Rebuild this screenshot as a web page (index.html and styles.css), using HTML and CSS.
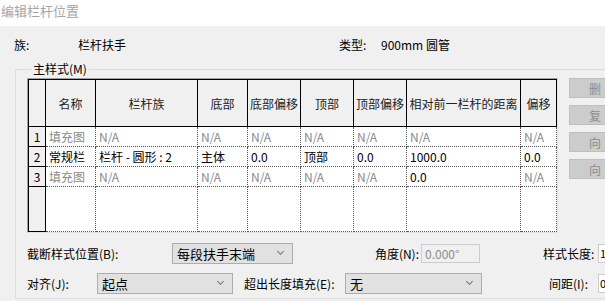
FILE: index.html
```html
<!DOCTYPE html>
<html>
<head>
    <title>编辑栏杆位置</title>
    <link rel="stylesheet" href="styles.css">
</head>
<body>
    <div class="titlebar">编辑栏杆位置</div>
    <div class="dialog">
        <div class="info">
            <span class="info-label">族:</span>
            <span class="info-value">栏杆扶手</span>
            <span class="info-label type-label">类型:</span>
            <span class="info-value type-value">900mm 圆管</span>
        </div>
        <fieldset class="group">
            <legend>主样式(M)</legend>
            <div class="main">
                <div class="grid-frame">
                    <table class="grid">
                        <colgroup>
                            <col style="width:17px">
                            <col style="width:50px">
                            <col style="width:102px">
                            <col style="width:50px">
                            <col style="width:53px">
                            <col style="width:53px">
                            <col style="width:53px">
                            <col style="width:114px">
                            <col style="width:36px">
                        </colgroup>
                        <tr class="head">
                            <th></th>
                            <th>名称</th>
                            <th>栏杆族</th>
                            <th>底部</th>
                            <th>底部偏移</th>
                            <th>顶部</th>
                            <th>顶部偏移</th>
                            <th>相对前一栏杆的距离</th>
                            <th>偏移</th>
                        </tr>
                        <tr class="dim">
                            <th>1</th>
                            <td>填充图</td>
                            <td>N/A</td>
                            <td>N/A</td>
                            <td>N/A</td>
                            <td>N/A</td>
                            <td>N/A</td>
                            <td>N/A</td>
                            <td>N/A</td>
                        </tr>
                        <tr>
                            <th>2</th>
                            <td>常规栏</td>
                            <td>栏杆 - 圆形 : 2</td>
                            <td>主体</td>
                            <td>0.0</td>
                            <td>顶部</td>
                            <td>0.0</td>
                            <td>1000.0</td>
                            <td>0.0</td>
                        </tr>
                        <tr class="dim">
                            <th>3</th>
                            <td>填充图</td>
                            <td>N/A</td>
                            <td>N/A</td>
                            <td>N/A</td>
                            <td>N/A</td>
                            <td>N/A</td>
                            <td class="value">0.0</td>
                            <td>N/A</td>
                        </tr>
                        <tr class="empty">
                            <th></th>
                            <td></td>
                            <td></td>
                            <td></td>
                            <td></td>
                            <td></td>
                            <td></td>
                            <td></td>
                            <td></td>
                        </tr>
                    </table>
                </div>
                <div class="side-buttons">
                    <button class="side-btn">删</button>
                    <button class="side-btn">复</button>
                    <button class="side-btn">向</button>
                    <button class="side-btn">向</button>
                </div>
            </div>
            <div class="field-row first-row">
                <span class="label break-label">截断样式位置(B):</span>
                <div class="combo combo-break">每段扶手末端<span class="caret"></span></div>
                <span class="label angle-label">角度(N):</span>
                <div class="textbox angle-box">0.000°</div>
                <span class="label length-label">样式长度:</span>
                <div class="textbox edge-box">1</div>
            </div>
            <div class="field-row second-row">
                <span class="label align-label">对齐(J):</span>
                <div class="combo combo-align">起点<span class="caret"></span></div>
                <span class="label fill-label">超出长度填充(E):</span>
                <div class="combo combo-fill">无<span class="caret"></span></div>
                <span class="label spacing-label">间距(I):</span>
                <div class="textbox edge-box">0</div>
            </div>
        </fieldset>
    </div>
</body>
</html>
```

FILE: styles.css
```css
body {
    margin: 0;
    padding: 0;
    width: 605px;
    height: 301px;
    overflow: hidden;
    background-color: #f0f0f0;
    color: #000;
    font-family: "Noto Sans CJK SC", "Noto Sans", sans-serif;
    font-size: 12px;
}
.titlebar {
    height: 26px;
    background: #fff;
    color: #a6a6a6;
    font-size: 13px;
    line-height: 22px;
    padding-left: 1px;
}
.info {
    display: flex;
    align-items: center;
    height: 36px;
    padding-left: 14px;
}
.info-label {
    width: 64px;
}
.info-value {
    width: 261px;
}
.type-label {
    width: 42px;
}
.type-value {
    width: auto;
}
.group {
    margin: 0 0 0 15px;
    padding: 0 0 0 11px;
    border: 1px solid #dcdcdc;
    border-right: none;
    height: 237px;
    box-sizing: border-box;
}
.group legend {
    padding: 0 2px;
    margin-left: 4px;
    line-height: 14px;
}
.main {
    display: flex;
    align-items: flex-start;
    margin-top: 2px;
}
.grid-frame {
    border-top: 1px solid #a0a0a0;
    border-left: 1px solid #a0a0a0;
    border-bottom: 1px solid #e3e3e3;
    border-right: 1px solid #e3e3e3;
    background: #fff;
}
.grid {
    border-collapse: collapse;
    table-layout: fixed;
    width: 529px;
    background: #fff;
}
.grid th,
.grid td {
    padding: 0 0 0 3px;
    height: 19px;
    white-space: nowrap;
    overflow: hidden;
    font-weight: normal;
    text-align: left;
}
.grid td {
    border-right: 1px dotted #555;
    border-bottom: 1px dotted #555;
}
.grid th {
    background: #f0f0f0;
    border: 1px solid #000;
    text-align: center;
    padding: 0;
    color: #000;
}
.grid .head th {
    height: 46px;
    text-align: center;
    color: #222;
}
.grid .dim td {
    color: #8a8a8a;
}
.grid .dim td.value {
    color: #000;
}
.grid .empty th,
.grid .empty td {
    height: 44px;
}
.side-buttons {
    display: flex;
    flex-direction: column;
    gap: 7px;
    margin-left: 11px;
}
.side-btn {
    width: 36px;
    height: 20px;
    padding: 0 0 0 19px;
    border: 1px solid #bfbfbf;
    border-right: none;
    background: #cccccc;
    color: #8c8c8c;
    font-family: inherit;
    font-size: 12px;
    text-align: left;
}
.field-row {
    display: flex;
    align-items: center;
}
.first-row {
    margin-top: 10px;
    height: 21px;
}
.second-row {
    margin-top: 8px;
    height: 22px;
}
.label {
    flex: none;
}
.break-label {
    width: 145px;
}
.combo {
    position: relative;
    box-sizing: border-box;
    height: 21px;
    border: 1px solid #adadad;
    background: #e1e1e1;
    padding-left: 4px;
    line-height: 19px;
    font-size: 13px;
    flex: none;
}
.caret {
    position: absolute;
    right: 9px;
    top: 5px;
    width: 4px;
    height: 4px;
    border-right: 1px solid #777;
    border-bottom: 1px solid #777;
    transform: rotate(45deg);
}
.combo-break {
    width: 121px;
}
.angle-label {
    width: 126px;
    text-align: right;
    padding-right: 2px;
}
.textbox {
    box-sizing: border-box;
    height: 19px;
    border: 1px solid #ccc;
    background: #f0f0f0;
    color: #8c8c8c;
    padding-left: 3px;
    line-height: 17px;
    flex: none;
}
.angle-box {
    width: 59px;
}
.length-label {
    margin-left: 63px;
    width: 55px;
}
.edge-box {
    width: 10px;
    padding-left: 1px;
    font-size: 11px;
    color: #000;
    background: #fff;
    border-right: none;
}
.align-label {
    width: 70px;
}
.combo-align {
    width: 136px;
}
.fill-label {
    margin-left: 11px;
    width: 101px;
}
.combo-fill {
    width: 137px;
}
.spacing-label {
    margin-left: 67px;
    width: 49px;
}
```
